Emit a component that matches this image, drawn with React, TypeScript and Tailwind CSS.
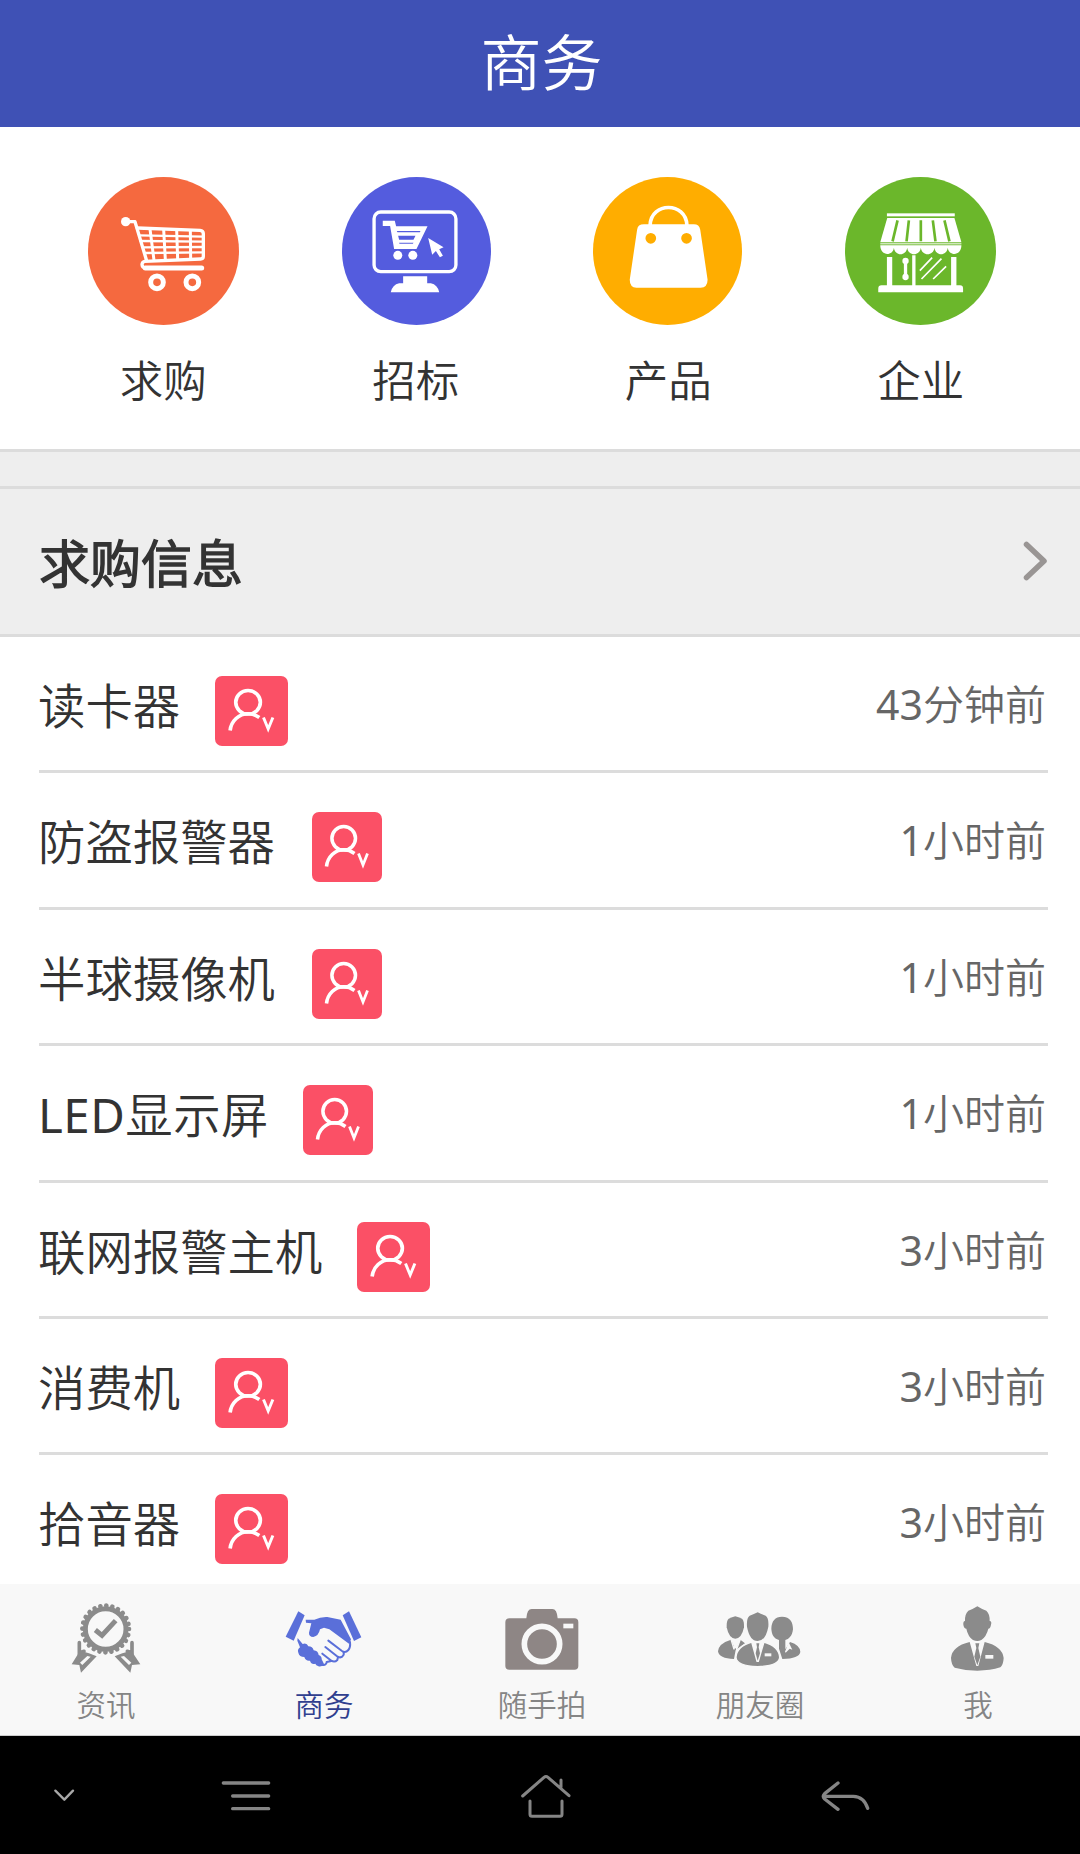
import React from 'react';

interface Category {
  label: string;
  color: string;
  size: string;
  icon: React.ReactNode;
}

interface Inquiry {
  title: string;
  time: string;
  badge: string;
  spacing?: string;
}

interface Tab {
  label: string;
  active?: boolean;
  icon: React.ReactNode;
}

const CartIcon = () => (
  <svg viewBox="54 50 453 444" preserveAspectRatio="none" className="w-full h-full" fill="none" stroke="#fff" strokeLinecap="round" strokeLinejoin="round">
    <circle cx="167" cy="184" r="14" fill="#fff" stroke="none" />
    <path d="M167 184H195L229 298" strokeWidth="10" />
    <path d="M202 203L390 210Q400 211 400 220V288Q400 296 392 296L224 303Q216 305 216 313Q217 323 226 323H395" strokeWidth="10" />
    <path d="M226 323H395" strokeWidth="15" />
    <path d="M208 225L400 229M212 242L400 244M217 261L400 260M222 278L400 276" strokeWidth="7" />
    <path d="M240 206L252 300M281 208L286 298M320 209L323 297M361 211L362 296" strokeWidth="9" />
    <circle cx="261" cy="366" r="19" strokeWidth="15" />
    <circle cx="367" cy="366" r="19" strokeWidth="15" />
  </svg>
);

const MonitorIcon = () => (
  <svg viewBox="816 50 446 444" preserveAspectRatio="none" className="w-full h-full" fill="#fff">
    <rect x="912" y="155" width="245" height="179" rx="20" fill="none" stroke="#fff" strokeWidth="10" />
    <path d="M999 348H1071V369H1082Q1102 373 1107 396H962Q967 373 987 369H999Z" />
    <path fillRule="evenodd" d="M938 181H974L978 198H1072L1039 266H972L960 197H938ZM980 212L982 216H1049L1051 212ZM984 226L987 238H1030L1036 226ZM987 247L988 250H1028L1030 247Z" />
    <circle cx="983" cy="285" r="13.500" />
    <circle cx="1028" cy="285" r="13.500" />
    <path d="M1074 233L1120 261L1107 267L1118 286L1109 291L1097 272L1086 283Z" />
  </svg>
);

const BagIcon = () => (
  <svg viewBox="70 50 446 444" preserveAspectRatio="none" className="w-full h-full" fill="#fff">
    <path d="M241 194C244 124 348 124 351 194" fill="none" stroke="#fff" strokeWidth="11" />
    <path fillRule="evenodd" d="M222 192H372Q388 192 391 208L413 358Q413 381 392 382H200Q180 381 180 358L202 208Q204 192 222 192ZM227 234A16 16 0 1 0 259 234A16 16 0 1 0 227 234ZM334 234A16 16 0 1 0 366 234A16 16 0 1 0 334 234Z" />
  </svg>
);

const StoreIcon = () => (
  <svg viewBox="824 50 454 444" preserveAspectRatio="none" className="w-full h-full" fill="#fff">
    <rect x="950" y="159" width="204" height="9" />
    <path d="M951 173H1153L1174 246H930Z" />
    <rect x="930" y="249" width="244" height="3" />
    <path d="M930 255H1174C1174 288 1136 288 1133 262C1130 288 1096 288 1093 262C1090 288 1055 288 1052 262C1049 288 1014 288 1011 262C1008 288 974 288 971 262C968 288 930 288 930 255Z" />
    <path d="M982 180L967 243M1016 180L1009 243M1052 180V243M1088 180L1096 243M1123 180L1138 243" stroke="#6bb72b" strokeWidth="8" />
    <path d="M950 290H966V375H1026V285H1036V375H1143V290H1159V375H1170Q1179 375 1179 385V396H924V385Q924 375 934 375H950Z" />
    <path d="M1006 302V350" stroke="#fff" strokeWidth="10" />
    <circle cx="1006" cy="302" r="9.500" />
    <circle cx="1006" cy="350" r="9.500" />
    <path d="M1049 331L1086 292M1054 356L1114 295M1089 356L1128 318" stroke="#fff" strokeWidth="5" />
  </svg>
);

const BadgeIcon = () => (
  <svg viewBox="0 0 70 70" preserveAspectRatio="none" className="w-full h-full" fill="none" stroke="#fff">
    <circle cx="31.700" cy="26.300" r="11.800" strokeWidth="3.500" />
    <path d="M14.500 54.500C15.500 45 23 37.800 31.700 37.800C35.500 37.800 39 39 42.500 41.500" strokeWidth="3.500" />
    <path d="M46.500 41.500L51 53L55.500 41.500" strokeWidth="2.800" />
  </svg>
);

const AwardIcon = () => (
  <svg viewBox="195 90 246 228" className="w-[82px] h-[76px]" fill="none" stroke="#8b8b8b">
    <circle cx="317" cy="177" r="61" strokeWidth="15" />
    <circle cx="317" cy="177" r="70" strokeWidth="14" strokeLinecap="round" strokeDasharray="0.1 18.22" />
    <path d="M286 180L306 196L347 152" strokeWidth="15" />
    <path d="M238 218V248L252 244M396 218V248L382 244" strokeWidth="11" strokeLinecap="round" />
    <path fill="#8b8b8b" stroke="none" fillRule="evenodd" d="M240 242L267 250L290 259L243 308L238 285L215 283ZM262 258L240 278L247 285L272 260Z" />
    <path fill="#8b8b8b" stroke="none" fillRule="evenodd" d="M394 242L367 250L344 259L391 308L396 285L421 283ZM372 258L394 278L387 285L362 260Z" />
  </svg>
);

const HandshakeIcon = () => (
  <svg viewBox="849 90 246 228" className="w-[82px] h-[76px]" fill="#5a6fd9">
    <path d="M895 124L914 136L881 212L857 200Z" />
    <path d="M1047 124L1084 202L1062 213L1028 136Z" />
    <path d="M917 149L943 149Q962 140 982 141L1022 149L1053 208L1048 222L988 178L972 173L960 178Q956 198 940 201Q926 200 927 188L934 160L918 158Z" />
    <path d="M893 204L908 222Q920 217 925 229Q938 229 941 241Q954 242 956 255Q966 259 965 268L972 282Q963 293 954 288Q948 286 946 281Q934 285 930 272Q917 274 913 261Q898 261 895 248Q891 239 900 232L892 212Z" />
    <path fill="none" stroke="#5a6fd9" strokeWidth="6" strokeLinecap="round" strokeLinejoin="round" d="M985 212L1026 243Q1036 250 1045 240Q1052 232 1050 216M976 231L1013 260Q1024 266 1030 256Q1033 252 1030 246M967 251L994 272Q1004 278 1012 270L1014 261M961 285Q980 287 980 276L994 273" />
  </svg>
);

const CameraIcon = () => (
  <svg viewBox="362 90 246 228" className="w-[82px] h-[76px]" fill="#8e8685">
    <path d="M388 145H438Q440 117 454 117H516Q530 117 532 145H582Q594 145 594 157V288Q594 299 582 299H387Q375 299 375 288V157Q375 145 388 145Z" />
    <circle cx="485" cy="222" r="53" fill="none" stroke="#f8f8f8" strokeWidth="17" />
    <rect x="549" y="161" width="30" height="14" fill="#f8f8f8" />
  </svg>
);

const GroupIcon = () => (
  <svg viewBox="86 90 246 228" className="w-[82px] h-[76px] overflow-visible" fill="#8b8b8b">
    <path d="M135 139Q144 142 155 146Q162 152 161 172Q154 206 135 206Q116 206 109 172Q108 152 115 146Q126 142 135 139Z" />
    <path d="M122 209Q85 220 83 244Q86 266 131 267L136 240L164 220L150 209L139 235H133Z" />
    <path d="M122 208L131 238L135 214L139 238L150 208" fill="none" stroke="#f8f8f8" strokeWidth="4" />
    <path d="M275 140C300 140 308 157 308 178C306 198 295 208 285 210V238L299 216Q330 226 330 246Q327 266 276 267L266 236V210C250 205 244 193 243 176C244 153 254 140 275 140Z" />
    <path d="M284 245L295 217L306 239L298 236L286 248Z" fill="#f8f8f8" />
    <path d="M202 127Q213 133 226 137Q236 144 234 170Q226 213 202 213Q178 213 170 170Q168 144 178 137Q191 133 202 127Z" />
    <path d="M184 216Q139 229 137 262Q138 288 202 290Q266 288 268 262Q266 229 221 216L204 274H200Z" stroke="#f8f8f8" strokeWidth="4" />
    <path d="M198 220H207L205 232L209 250L202 272L196 250L200 232Z" />
    <rect x="223" y="250" width="20" height="9" fill="#f8f8f8" />
  </svg>
);

const PersonIcon = () => (
  <svg viewBox="740 90 246 228" className="w-[82px] h-[76px]" fill="#8b8b8b">
    <path d="M861 109Q873 117 888 122Q899 132 898 153Q905 154 902 164Q900 176 894 176Q888 200 873 210Q861 216 848 210Q833 200 828 176Q821 176 819 164Q818 154 824 153Q823 132 834 122Q849 117 861 109Z" />
    <path d="M838 216Q785 229 782 264Q783 285 793 293Q825 302 861 302Q900 302 930 292Q939 284 940 264Q936 229 883 216L864 288H858Z" />
    <path d="M855 220H867L864 234L870 260L861 286L852 260L858 234Z" />
    <rect x="885" y="255" width="24" height="11" fill="#f8f8f8" />
  </svg>
);

const categories: Category[] = [
  { label: '求购', color: 'bg-[#f5693f]', size: 'w-[151px]', icon: <CartIcon /> },
  { label: '招标', color: 'bg-[#545cde]', size: 'w-[149px] ml-px', icon: <MonitorIcon /> },
  { label: '产品', color: 'bg-[#ffad00]', size: 'w-[149px] mr-[2px]', icon: <BagIcon /> },
  { label: '企业', color: 'bg-[#6bb72b]', size: 'w-[151px]', icon: <StoreIcon /> },
];

const inquiries: Inquiry[] = [
  { title: '读卡器', time: '43分钟前', badge: 'ml-[35px] w-[73px]' },
  { title: '防盗报警器', time: '1小时前', badge: 'ml-[37px] w-[70px]' },
  { title: '半球摄像机', time: '1小时前', badge: 'ml-[37px] w-[70px]' },
  { title: 'LED显示屏', time: '1小时前', badge: 'ml-[34px] w-[70px]', spacing: 'tracking-[0.5px]' },
  { title: '联网报警主机', time: '3小时前', badge: 'ml-[35px] w-[73px]' },
  { title: '消费机', time: '3小时前', badge: 'ml-[35px] w-[73px]' },
  { title: '拾音器', time: '3小时前', badge: 'ml-[35px] w-[73px]' },
];

const tabs: Tab[] = [
  { label: '资讯', icon: <AwardIcon /> },
  { label: '商务', active: true, icon: <HandshakeIcon /> },
  { label: '随手拍', icon: <CameraIcon /> },
  { label: '朋友圈', icon: <GroupIcon /> },
  { label: '我', icon: <PersonIcon /> },
];

const SystemBar = () => (
  <div className="h-[118px] bg-black flex items-start pt-[34px]">
    <svg viewBox="150 600 96 150" className="ml-[50px] w-[32px] h-[50px]" fill="none" stroke="#a8a8a8" strokeWidth="7" strokeLinecap="round" strokeLinejoin="round">
      <path d="M166 662L193 689L219 662" />
    </svg>
    <svg viewBox="660 600 156 150" className="ml-[138px] w-[52px] h-[50px]" fill="none" stroke="#858585" strokeWidth="10" strokeLinecap="round">
      <path d="M670 639H806M698 678H806M698 716H806" />
    </svg>
    <svg viewBox="420 600 156 150" className="ml-[248px] w-[52px] h-[50px]" fill="none" stroke="#858585" strokeWidth="9" strokeLinecap="round" strokeLinejoin="round">
      <path d="M428 678L492 622Q498 617 504 622L567 677M543 630V652" />
      <path d="M450 693V733Q450 739 456 739H540Q546 739 546 733V693" />
    </svg>
    <svg viewBox="390 600 156 150" className="ml-[248px] w-[52px] h-[50px]" fill="none" stroke="#858585" strokeWidth="10" strokeLinecap="round" strokeLinejoin="round">
      <path d="M444 639L404 671Q396 679 404 687L444 718M403 679H490Q522 680 533 715" />
    </svg>
  </div>
);

export default function App() {
  return (
    <div className="w-[1080px] h-[1854px] flex flex-col overflow-hidden bg-white text-[#333] font-['Noto_Sans','Noto_Sans_CJK_SC_DemiLight','Noto_Sans_CJK_SC',sans-serif]">
      <header className="h-[127px] shrink-0 bg-[#3f51b5] pl-[3px] text-center text-[61px] leading-[125px] text-white">
        商务
      </header>

      <section className="h-[322px] shrink-0 grid grid-cols-4 pl-[37px] pr-[33px] pt-[50px]">
        {categories.map((item) => (
          <div key={item.label} className="flex flex-col items-center">
            <div className={`h-[148px] rounded-[50%] ${item.size} ${item.color}`}>{item.icon}</div>
            <span className="mt-[25px] text-[43.5px] leading-[60px]">{item.label}</span>
          </div>
        ))}
      </section>

      <div className="h-[37px] shrink-0 bg-[#eee] border-t-[3px] border-[#dcdcdc]" />
      <div className="h-[151px] shrink-0 bg-[#eee] border-y-[3px] border-[#dcdcdc] flex items-start justify-between pl-[39px] pr-[32px]">
        <h2 className="text-[51px] leading-[148px] font-bold">求购信息</h2>
        <svg viewBox="0 0 26 42" className="mt-[51px] w-[26px] h-[42px]" fill="none" stroke="#999594" strokeWidth="5.500" strokeLinecap="round">
          <path d="M4.500 4.500L22 21L4.500 37.500" strokeLinejoin="round" />
        </svg>
      </div>

      <ul className="h-[947px] shrink-0 overflow-hidden pl-[39px] pr-[32px]">
        {inquiries.map((item) => (
          <li key={item.title} className="h-[136.4px] flex items-start border-b-[3px] border-[#dcdcdc]">
            <span className={`-ml-px text-[47.4px] leading-[137px] ${item.spacing ?? ''}`}>{item.title}</span>
            <span className={`mt-[39px] h-[70px] rounded-[7px] bg-[#fb5066] ${item.badge}`}>
              <BadgeIcon />
            </span>
            <time className="ml-auto mr-[2px] text-[41px] leading-[134px] text-[#666]">{item.time}</time>
          </li>
        ))}
      </ul>

      <nav className="h-[152px] shrink-0 bg-[#f8f8f8] border-b border-[#ccc] flex justify-between pl-[33px] pr-[29px] pt-[16px]">
        {tabs.map((tab) => (
          <div key={tab.label} className={`w-[146px] flex flex-col items-center ${tab.active ? 'text-[#303f8f]' : 'text-[#858585]'}`}>
            {tab.icon}
            <span className="mt-[8px] text-[29.5px] leading-[42px]">{tab.label}</span>
          </div>
        ))}
      </nav>

      <SystemBar />
    </div>
  );
}
